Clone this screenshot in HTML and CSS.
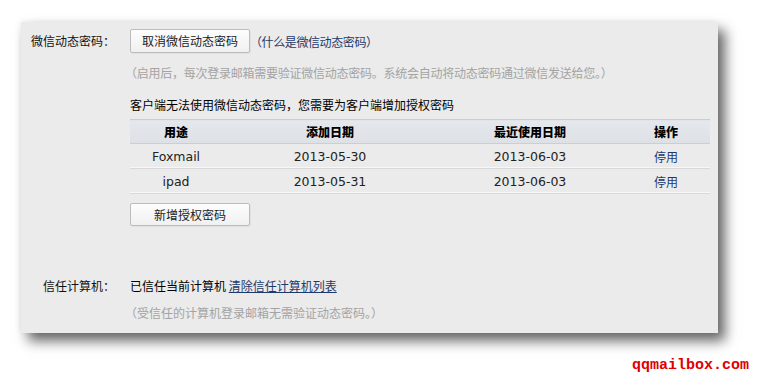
FILE: index.html
```html
<!DOCTYPE html>
<html lang="zh-CN">
<head>
<meta charset="utf-8">
<title>微信动态密码</title>
<link rel="stylesheet" href="styles.css">
</head>
<body>
<div class="panel">
  <div class="row row-wx">
    <div class="label">微信动态密码：</div>
    <div class="content">
      <div class="line-btn">
        <button class="btn">取消微信动态密码</button>
        <a class="help">（什么是微信动态密码）</a>
      </div>
      <div class="note note1">（启用后，每次登录邮箱需要验证微信动态密码。系统会自动将动态密码通过微信发送给您。）</div>
      <div class="tip">客户端无法使用微信动态密码，您需要为客户端增加授权密码</div>
      <table class="grid">
        <thead>
          <tr><th class="c1">用途</th><th class="c2">添加日期</th><th class="c3">最近使用日期</th><th class="c4">操作</th></tr>
        </thead>
        <tbody>
          <tr><td>Foxmail</td><td>2013-05-30</td><td>2013-06-03</td><td class="op">停用</td></tr>
          <tr><td>ipad</td><td>2013-05-31</td><td>2013-06-03</td><td class="op">停用</td></tr>
        </tbody>
      </table>
      <button class="btn btn2">新增授权密码</button>
    </div>
  </div>
  <div class="row row-trust">
    <div class="label">信任计算机：</div>
    <div class="content">
      <div class="trust">已信任当前计算机 <a class="link">清除信任计算机列表</a></div>
      <div class="note note2">（受信任的计算机登录邮箱无需验证动态密码。）</div>
    </div>
  </div>
</div>
<div class="mark">qqmailbox.com</div>
</body>
</html>
```
FILE: styles.css
```css
html, body {
  margin: 0;
  padding: 0;
  background: #fff;
}
body {
  width: 761px;
  height: 375px;
  overflow: hidden;
  position: relative;
  font-family: "Noto Sans CJK SC", "DejaVu Sans", sans-serif;
  font-size: 12px;
  color: #111;
}
.panel {
  margin: 22px 0 0 21px;
  width: 697px;
  height: 311px;
  box-sizing: border-box;
  background: #ebebeb;
  box-shadow: 7px 8px 12px rgba(0,0,0,0.6), -1px -1px 6px rgba(0,0,0,0.06);
  padding-top: 7px;
}
.row {
  display: flex;
}
.label {
  width: 94px;
  text-align: right;
  flex: none;
  line-height: 24px;
  color: #111;
}
.content {
  margin-left: 15px;
  display: flex;
  flex-direction: column;
  align-items: flex-start;
}
.line-btn {
  display: flex;
  align-items: center;
  height: 24px;
}
.btn {
  font-family: "Noto Sans CJK SC", sans-serif;
  font-size: 12px;
  color: #222;
  width: 120px;
  height: 24px;
  padding: 0;
  border: 1px solid #bcbcbc;
  border-radius: 2px;
  background: linear-gradient(#fdfdfd, #f0f0f0);
  box-shadow: 1px 1px 0 rgba(0,0,0,0.04);
  line-height: 22px;
}
.help {
  margin-left: 0;
  color: #1d3a6b;
  letter-spacing: -0.4px;
}
.note {
  color: #a3a3a3;
  line-height: 18px;
  margin-left: -5px;
}
.note1 {
  margin-top: 11px;
  letter-spacing: -0.25px;
}
.tip {
  margin-top: 14px;
  line-height: 18px;
  color: #000;
}
.grid {
  margin-top: 5px;
  width: 580px;
  border-collapse: collapse;
  font-family: "DejaVu Sans", sans-serif;
  font-size: 12.5px;
  color: #222;
}
.grid th {
  font-family: "Noto Sans CJK SC", sans-serif;
  font-size: 12px;
  font-weight: 900;
  color: #000;
  height: 23px;
  background: linear-gradient(#e4e7eb, #dde1e6);
  border-top: 1px solid #c3cedb;
  border-bottom: 1px solid #c6d0dc;
  padding: 0;
}
.c1 { width: 92px; }
.c2 { width: 216px; }
.c3 { width: 184px; }
.c4 { width: 88px; }
.grid td {
  text-align: center;
  height: 24px;
  padding: 0;
  border-bottom: 1px solid #d8d8d8;
  box-shadow: inset 0 -1px 0 #f7f7f7;
}
.grid td.op {
  font-family: "Noto Sans CJK SC", sans-serif;
  font-size: 12px;
  color: #1d3a6b;
}
.btn2 {
  margin-top: 9px;
  height: 23px;
}
.row-trust {
  margin-top: 51px;
}
.row-trust .label {
  line-height: 18px;
}
.trust {
  line-height: 18px;
  color: #000;
}
.link {
  color: #1d3a6b;
  text-decoration: underline;
}
.note2 {
  margin-top: 9px;
}
.mark {
  position: absolute;
  left: 632px;
  top: 357px;
  font-family: "Liberation Mono", monospace;
  font-weight: bold;
  font-size: 15px;
  line-height: 17px;
  color: #e00000;
}
```
